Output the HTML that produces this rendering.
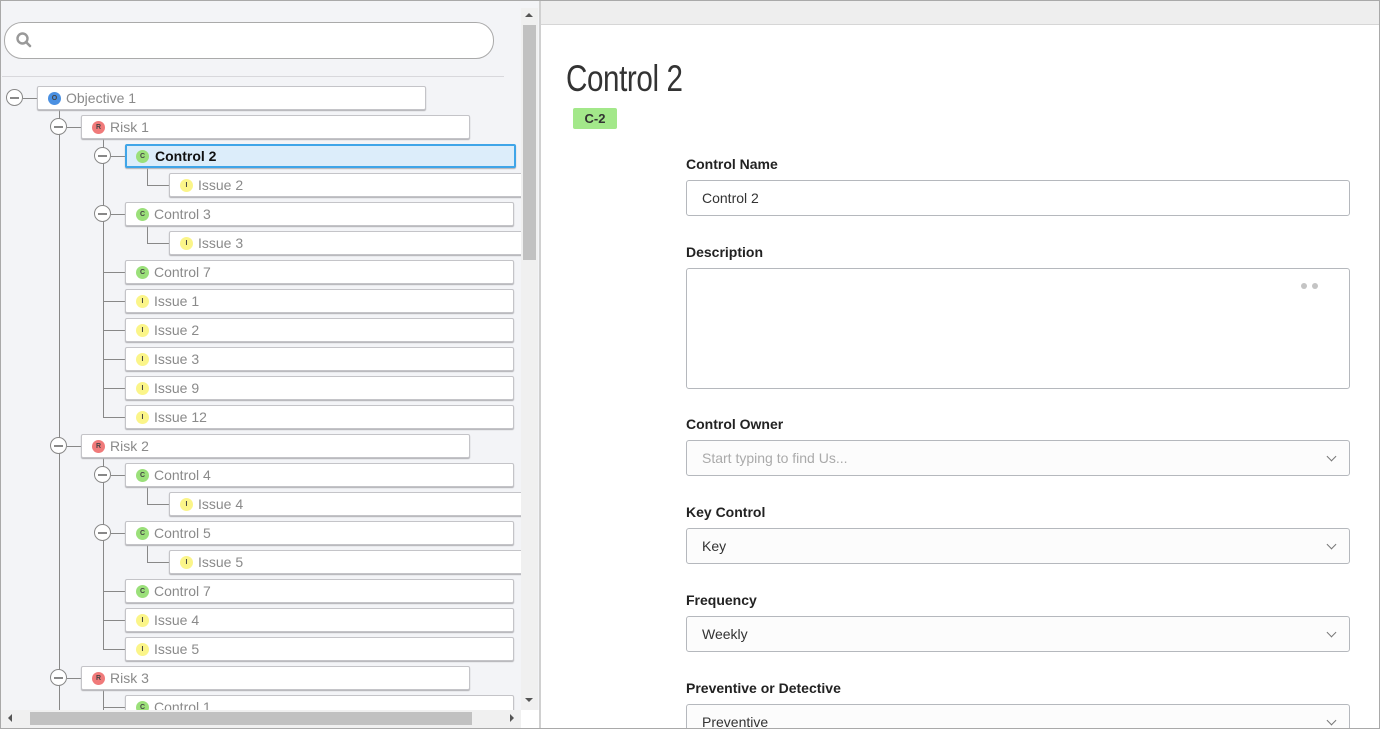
<!DOCTYPE html>
<html style="overflow:hidden;width:1380px;height:729px"><head><meta charset="utf-8"><style>
*{box-sizing:border-box;margin:0;padding:0}
body{width:1380px;height:729px;overflow:hidden;font-family:"Liberation Sans",sans-serif;background:#fff}
#wrap{position:relative;width:1380px;height:729px;overflow:hidden}
.a{position:absolute}
#frame{position:absolute;left:0;top:0;width:1380px;height:729px;border:1px solid #a9a9a9;z-index:50;pointer-events:none}
#left{position:absolute;left:0;top:0;width:539px;height:729px;background:#f3f4f7;overflow:hidden}
.box{position:absolute;height:24px;background:#fff;border:1px solid #c4c4c8;border-radius:2px;box-shadow:0 1px 1px #b0b0b4;font-size:14px;color:#8a8a8a;line-height:22px;padding-left:28px;white-space:nowrap}
.box .ic{position:absolute;left:10px;top:5px;width:13px;height:13px;border-radius:50%;font-size:7px;line-height:13px;text-align:center;color:#444;font-weight:bold}
.o{background:#4a90e2}.r{background:#f07a7a}.c{background:#9be07a}.i{background:#fbf589}
.tg{position:absolute;width:17px;height:17px;border:1px solid #888;border-radius:50%;background:#fff}
.tg:after{content:"";position:absolute;left:3px;top:7px;width:9px;height:2px;background:#888}
.v{position:absolute;width:1px;background:#888}
.h{position:absolute;height:1px;background:#888}
.lbl{position:absolute;left:686px;font-size:14px;font-weight:bold;color:#222}
.inp{position:absolute;left:686px;width:664px;height:36px;border:1px solid #b5b8bd;border-radius:3px;font-size:14px;color:#333;padding-left:15px;line-height:34px;background:#fff}
.sel{background:#fcfcfc}
.chev{position:absolute;right:14px;top:12px;width:7px;height:7px;border-right:1px solid #777;border-bottom:1px solid #777;transform:rotate(45deg)}
</style></head><body><div id="wrap">
<div id="left">
 <div class="a" style="left:4px;top:22px;width:490px;height:37px;border:1px solid #aaa;border-radius:18px;background:#fff"></div>
 <svg class="a" style="left:15px;top:31px" width="18" height="18" viewBox="0 0 18 18"><circle cx="7.5" cy="7.5" r="5" fill="none" stroke="#999" stroke-width="2.4"/><line x1="11" y1="11" x2="15" y2="15" stroke="#999" stroke-width="2.6" stroke-linecap="round"/></svg>
 <div class="a" style="left:2px;top:76px;width:502px;height:1px;background:#d8d8dc"></div>

 <div class="v" style="left:59px;top:110px;height:600px"></div>
 <div class="v" style="left:103px;top:139px;height:278px"></div>
 <div class="v" style="left:103px;top:458px;height:191px"></div>
 <div class="v" style="left:103px;top:690px;height:20px"></div>
 <div class="v" style="left:147px;top:168px;height:17px"></div>
 <div class="v" style="left:147px;top:226px;height:17px"></div>
 <div class="v" style="left:147px;top:487px;height:17px"></div>
 <div class="v" style="left:147px;top:545px;height:17px"></div>
 <div class="h" style="left:23px;top:98px;width:14px"></div>
 <div class="h" style="left:67px;top:127px;width:14px"></div>
 <div class="h" style="left:67px;top:446px;width:14px"></div>
 <div class="h" style="left:67px;top:678px;width:14px"></div>
 <div class="h" style="left:111px;top:156px;width:14px"></div>
 <div class="h" style="left:111px;top:214px;width:14px"></div>
 <div class="h" style="left:111px;top:475px;width:14px"></div>
 <div class="h" style="left:111px;top:533px;width:14px"></div>
 <div class="h" style="left:147px;top:185px;width:22px"></div>
 <div class="h" style="left:147px;top:243px;width:22px"></div>
 <div class="h" style="left:147px;top:504px;width:22px"></div>
 <div class="h" style="left:147px;top:562px;width:22px"></div>
 <div class="h" style="left:103px;top:272px;width:22px"></div>
 <div class="h" style="left:103px;top:301px;width:22px"></div>
 <div class="h" style="left:103px;top:330px;width:22px"></div>
 <div class="h" style="left:103px;top:359px;width:22px"></div>
 <div class="h" style="left:103px;top:388px;width:22px"></div>
 <div class="h" style="left:103px;top:417px;width:22px"></div>
 <div class="h" style="left:103px;top:591px;width:22px"></div>
 <div class="h" style="left:103px;top:620px;width:22px"></div>
 <div class="h" style="left:103px;top:649px;width:22px"></div>
 <div class="h" style="left:103px;top:707px;width:22px"></div>

 <div class="tg" style="left:6px;top:89px"></div>
 <div class="tg" style="left:50px;top:118px"></div>
 <div class="tg" style="left:94px;top:147px"></div>
 <div class="tg" style="left:94px;top:205px"></div>
 <div class="tg" style="left:50px;top:437px"></div>
 <div class="tg" style="left:94px;top:466px"></div>
 <div class="tg" style="left:94px;top:524px"></div>
 <div class="tg" style="left:50px;top:669px"></div>

 <div class="box" style="left:37px;top:86px;width:389px"><span class="ic o">O</span>Objective 1</div>
 <div class="box" style="left:81px;top:115px;width:389px"><span class="ic r">R</span>Risk 1</div>
 <div class="box" style="left:125px;top:144px;width:391px;background:#dcedfa;border:2px solid #3fa5e8;color:#111;font-weight:bold;line-height:20px;padding-left:28px"><span class="ic c" style="left:9px;top:4px">C</span>Control 2</div>
 <div class="box" style="left:169px;top:173px;width:360px"><span class="ic i">I</span>Issue 2</div>
 <div class="box" style="left:125px;top:202px;width:389px"><span class="ic c">C</span>Control 3</div>
 <div class="box" style="left:169px;top:231px;width:360px"><span class="ic i">I</span>Issue 3</div>
 <div class="box" style="left:125px;top:260px;width:389px"><span class="ic c">C</span>Control 7</div>
 <div class="box" style="left:125px;top:289px;width:389px"><span class="ic i">I</span>Issue 1</div>
 <div class="box" style="left:125px;top:318px;width:389px"><span class="ic i">I</span>Issue 2</div>
 <div class="box" style="left:125px;top:347px;width:389px"><span class="ic i">I</span>Issue 3</div>
 <div class="box" style="left:125px;top:376px;width:389px"><span class="ic i">I</span>Issue 9</div>
 <div class="box" style="left:125px;top:405px;width:389px"><span class="ic i">I</span>Issue 12</div>
 <div class="box" style="left:81px;top:434px;width:389px"><span class="ic r">R</span>Risk 2</div>
 <div class="box" style="left:125px;top:463px;width:389px"><span class="ic c">C</span>Control 4</div>
 <div class="box" style="left:169px;top:492px;width:360px"><span class="ic i">I</span>Issue 4</div>
 <div class="box" style="left:125px;top:521px;width:389px"><span class="ic c">C</span>Control 5</div>
 <div class="box" style="left:169px;top:550px;width:360px"><span class="ic i">I</span>Issue 5</div>
 <div class="box" style="left:125px;top:579px;width:389px"><span class="ic c">C</span>Control 7</div>
 <div class="box" style="left:125px;top:608px;width:389px"><span class="ic i">I</span>Issue 4</div>
 <div class="box" style="left:125px;top:637px;width:389px"><span class="ic i">I</span>Issue 5</div>
 <div class="box" style="left:81px;top:666px;width:389px"><span class="ic r">R</span>Risk 3</div>
 <div class="box" style="left:125px;top:695px;width:389px"><span class="ic c">C</span>Control 1</div>

 <div class="a" style="left:521px;top:8px;width:17px;height:702px;background:#f0f0f0"></div>
 <div class="a" style="left:523px;top:25px;width:13px;height:235px;background:#c1c1c1"></div>
 <div class="a" style="left:525px;top:13px;width:0;height:0;border-left:4px solid transparent;border-right:4px solid transparent;border-bottom:4px solid #555"></div>
 <div class="a" style="left:525px;top:698px;width:0;height:0;border-left:4px solid transparent;border-right:4px solid transparent;border-top:4px solid #555"></div>
 <div class="a" style="left:0;top:710px;width:521px;height:19px;background:#f0f0f0"></div>
 <div class="a" style="left:521px;top:710px;width:18px;height:19px;background:#fff"></div>
 <div class="a" style="left:30px;top:712px;width:442px;height:13px;background:#c1c1c1"></div>
 <div class="a" style="left:8px;top:714px;width:0;height:0;border-top:4px solid transparent;border-bottom:4px solid transparent;border-right:4px solid #555"></div>
 <div class="a" style="left:510px;top:714px;width:0;height:0;border-top:4px solid transparent;border-bottom:4px solid transparent;border-left:4px solid #555"></div>
 <div class="a" style="left:0;top:0;width:539px;height:8px;background:#f3f4f7"></div>
</div>
<div class="a" style="left:539px;top:0;width:2px;height:729px;background:#d0d0d0"></div>

<div class="a" style="left:541px;top:0;width:839px;height:25px;background:#eeeeee;border-bottom:1px solid #d6d6d6"></div>
<div class="a" style="left:566px;top:58px;font-size:37px;font-weight:normal;color:#333;transform:scaleX(0.8);transform-origin:left;letter-spacing:-0.5px">Control 2</div>
<div class="a" style="left:573px;top:108px;width:44px;height:21px;background:#a3e88a;border-radius:2px;font-size:13px;font-weight:bold;color:#333;text-align:center;line-height:21px">C-2</div>

<div class="lbl" style="top:156px">Control Name</div>
<div class="inp" style="top:180px">Control 2</div>
<div class="lbl" style="top:244px">Description</div>
<div class="inp" style="top:268px;height:121px"><span class="a" style="left:614px;top:14px;width:6px;height:6px;border-radius:50%;background:#c4c4c4"></span><span class="a" style="left:625px;top:14px;width:6px;height:6px;border-radius:50%;background:#c4c4c4"></span></div>
<div class="lbl" style="top:416px">Control Owner</div>
<div class="inp sel" style="top:440px;color:#aaa">Start typing to find Us...<span class="chev"></span></div>
<div class="lbl" style="top:504px">Key Control</div>
<div class="inp sel" style="top:528px">Key<span class="chev"></span></div>
<div class="lbl" style="top:592px">Frequency</div>
<div class="inp sel" style="top:616px">Weekly<span class="chev"></span></div>
<div class="lbl" style="top:680px">Preventive or Detective</div>
<div class="inp sel" style="top:704px">Preventive<span class="chev"></span></div>
<div id="frame"></div>
</div></body></html>
